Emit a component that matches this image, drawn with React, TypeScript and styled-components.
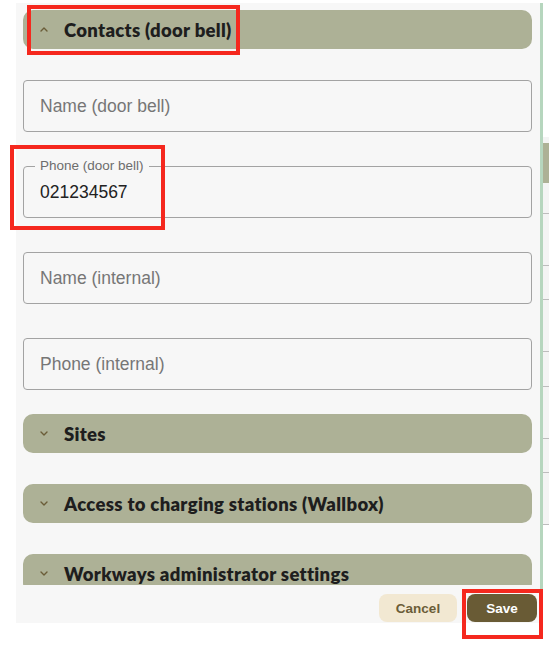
import React from 'react'
import styled, { createGlobalStyle } from 'styled-components'

const GlobalStyle = createGlobalStyle`
  html, body { margin: 0; padding: 0; background: #ffffff; }
  * { box-sizing: border-box; }
`

const Page = styled.div`
  position: relative;
  width: 549px;
  height: 648px;
  display: flex;
  overflow: hidden;
  font-family: 'Liberation Sans', Arial, sans-serif;
`

const Drawer = styled.div`
  margin: 3px 0 0 16px;
  width: 524px;
  height: 620px;
  background: #f7f7f7;
  display: flex;
  flex-direction: column;
`

const Body = styled.div`
  flex: 1;
  overflow: hidden;
  padding: 7px 8px 0 7px;
  display: flex;
  flex-direction: column;
  gap: 31px;
`

const Item = styled.section``

const Header = styled.div`
  height: 39px;
  border-radius: 10px;
  background: #adb196;
  display: flex;
  align-items: center;
  gap: 16px;
  padding-left: 17px;
  font-family: 'Lato', 'Open Sans', sans-serif;
  font-weight: 800;
  font-size: 18.5px;
  letter-spacing: 0.3px;
  color: #1e1e1e;
  white-space: nowrap;
`

const Chevron = styled.svg<{ $open: boolean }>`
  width: 8px;
  height: 5px;
  flex-shrink: 0;
  transform: ${p => (p.$open ? 'rotate(180deg)' : 'none')};
`

const Fields = styled.div`
  padding-top: 31px;
  margin-bottom: -7px;
  display: flex;
  flex-direction: column;
  gap: 34px;
`

const Input = styled.input`
  display: block;
  height: 52px;
  width: 100%;
  margin: 0;
  border: 1px solid #a3a3a3;
  border-radius: 4px;
  background: transparent;
  padding: 0 16px;
  font-family: 'Liberation Sans', Arial, sans-serif;
  font-size: 17.5px;
  color: #222;
  outline: none;
  &::placeholder { color: #767676; }
`

const Outlined = styled.div`
  position: relative;
`

const FloatLabel = styled.label`
  position: absolute;
  left: 12px;
  top: -8px;
  padding: 0 5px;
  background: #f7f7f7;
  font-size: 13.5px;
  line-height: 15px;
  color: #6d6d6d;
`

const Footer = styled.div`
  height: 38px;
  display: flex;
  justify-content: flex-end;
  align-items: flex-start;
  gap: 10px;
  padding: 9px 3px 0 0;
  overflow: hidden;
`

const Button = styled.button<{ $primary?: boolean }>`
  height: 28px;
  border: none;
  border-radius: 8px;
  padding: 0;
  width: ${p => (p.$primary ? '70px' : '78px')};
  background: ${p => (p.$primary ? '#695b35' : '#f2e8d2')};
  color: ${p => (p.$primary ? '#ffffff' : '#6b5d38')};
  font-family: 'Liberation Sans', Arial, sans-serif;
  font-weight: 700;
  font-size: 13.5px;
`

const Divider = styled.div`
  margin-top: 3px;
  width: 3px;
  height: 590px;
  background: #b6d6be;
  flex-shrink: 0;
`

const Backdrop = styled.div`
  flex: 1;
  padding-top: 137px;
`

const BgTable = styled.div`
  background: #f4f4f4;
  padding-top: 6px;
`

const BgHead = styled.div`
  height: 40px;
  background: #adb196;
`

const BgRow = styled.div<{ $h: number }>`
  height: ${p => p.$h}px;
  border-bottom: 1px solid #bdbdbd;
`

const Mark = styled.div<{ $x: number; $y: number; $w: number; $h: number }>`
  position: absolute;
  left: ${p => p.$x}px;
  top: ${p => p.$y}px;
  width: ${p => p.$w}px;
  height: ${p => p.$h}px;
  border: 4px solid #f5281e;
  pointer-events: none;
`

function Caret({ open }: { open: boolean }) {
  return (
    <Chevron $open={open} viewBox="0 0 8 5">
      <polyline points="1,1 4,4 7,1" fill="none" stroke="#6b5d38" strokeWidth="1.4" strokeLinecap="round" strokeLinejoin="round" />
    </Chevron>
  )
}

const SECTIONS = ['Sites', 'Access to charging stations (Wallbox)', 'Workways administrator settings']
const ROWS = [31, 52, 34, 52, 35, 52, 34, 52]

export default function App() {
  return (
    <>
      <GlobalStyle />
      <Page>
        <Drawer>
          <Body>
            <Item>
              <Header>
                <Caret open />
                Contacts (door bell)
              </Header>
              <Fields>
                <Input placeholder="Name (door bell)" />
                <Outlined>
                  <FloatLabel>Phone (door bell)</FloatLabel>
                  <Input defaultValue="021234567" />
                </Outlined>
                <Input placeholder="Name (internal)" />
                <Input placeholder="Phone (internal)" />
              </Fields>
            </Item>
            {SECTIONS.map(s => (
              <Item key={s}>
                <Header>
                  <Caret open={false} />
                  {s}
                </Header>
              </Item>
            ))}
          </Body>
          <Footer>
            <Button>Cancel</Button>
            <Button $primary>Save</Button>
          </Footer>
        </Drawer>
        <Divider />
        <Backdrop>
          <BgTable>
            <BgHead />
            {ROWS.map((h, i) => <BgRow key={i} $h={h} />)}
          </BgTable>
        </Backdrop>
        <Mark $x={27} $y={5} $w={213} $h={50} />
        <Mark $x={10} $y={145} $w={155} $h={85} />
        <Mark $x={462} $y={589} $w={81} $h={50} />
      </Page>
    </>
  )
}
